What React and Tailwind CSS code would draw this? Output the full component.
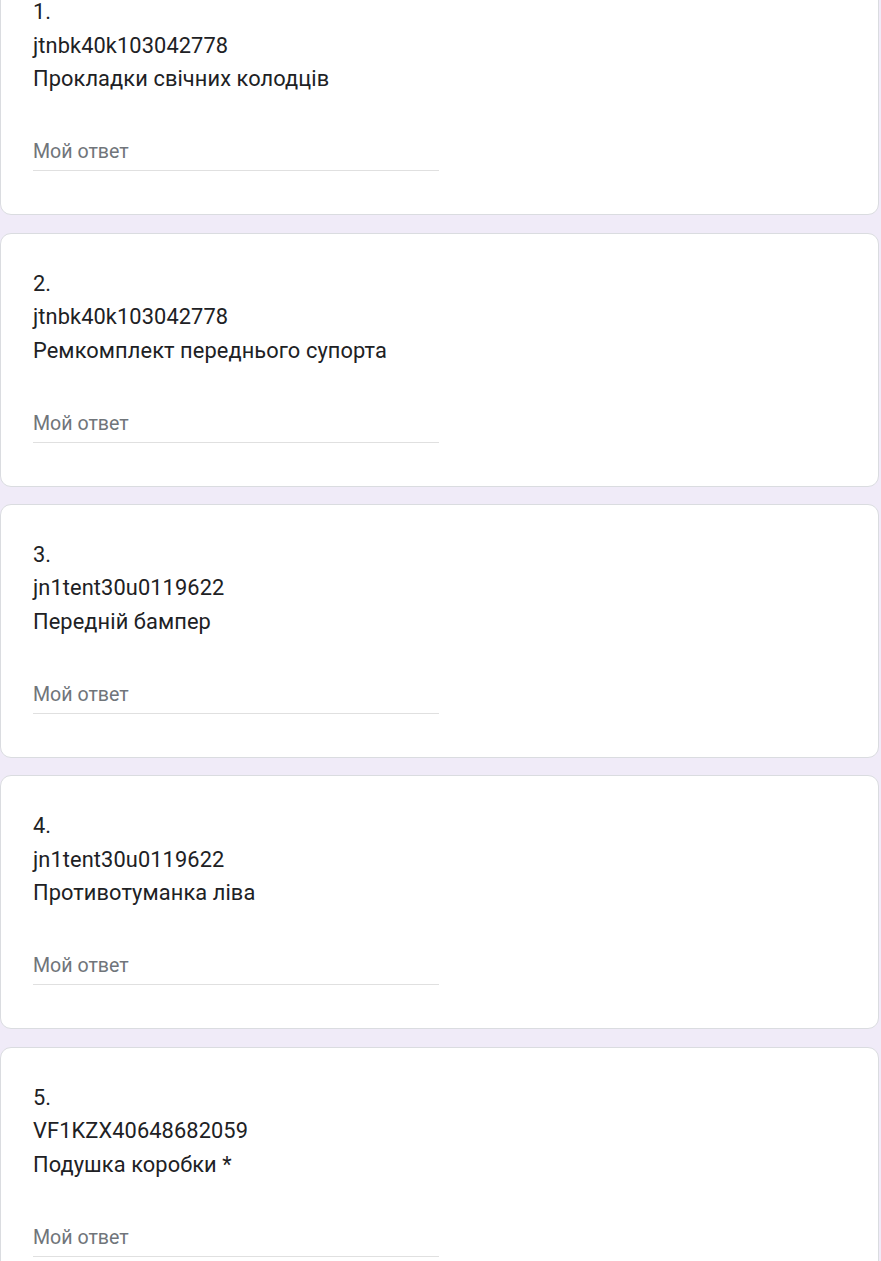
import React from "react";

const items = [
  { n: "1.", id: "jtnbk40k103042778", name: "Прокладки свічних колодців" },
  { n: "2.", id: "jtnbk40k103042778", name: "Ремкомплект переднього супорта" },
  { n: "3.", id: "jn1tent30u0119622", name: "Передній бампер" },
  { n: "4.", id: "jn1tent30u0119622", name: "Противотуманка ліва" },
  { n: "5.", id: "VF1KZX40648682059", name: "Подушка коробки *" },
];

function Card({ n, id, name }) {
  return (
    <div className="bg-white border border-[#dadce0] rounded-[11px] w-[879px] pt-[33px] pl-[32px] pb-[43px] mb-[17.4px]">
      <div className="text-[#202124] text-[21.8px] leading-[33.5px] tracking-[0.1px]">
        <div>{n}</div>
        <div>{id}</div>
        <div>{name}</div>
      </div>
      <div className="mt-[42.5px] w-[406px] border-b-[1.5px] border-[#e0e0e0] pb-[4px]">
        <div className="text-[#70757a] text-[19.6px] leading-[28px]">Мой ответ</div>
      </div>
    </div>
  );
}

export default function App() {
  return (
    <div
      className="bg-[#f0ebf8] h-[1261px] overflow-hidden"
      style={{ fontFamily: "Roboto, 'Noto Sans', sans-serif" }}
    >
      <div className="mt-[-38.9px]">
        {items.map((it) => (
          <Card key={it.n} {...it} />
        ))}
      </div>
    </div>
  );
}
